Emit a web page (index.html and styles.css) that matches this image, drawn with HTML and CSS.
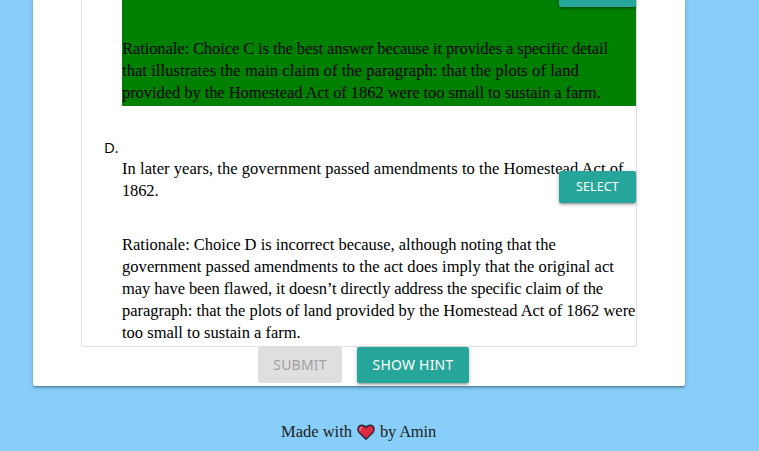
FILE: index.html
```html
<!DOCTYPE html>
<html lang="en">
<head>
<meta charset="utf-8">
<title>Reading quiz</title>
<link rel="stylesheet" href="styles.css">
</head>
<body>
<main class="card">
  <ol class="choices">
    <li class="choice choice-c">
      <div class="choice-body correct">
        <button class="btn select select-c"></button>
        <p class="rationale"><span class="line c1">Rationale: Choice C is the best answer because it provides a specific detail</span><span class="line c2">that illustrates the main claim of the paragraph: that the plots of land</span><span class="line c3">provided by the Homestead Act of 1862 were too small to sustain a farm.</span></p>
      </div>
    </li>
    <li class="choice choice-d">
      <span class="marker">D.</span>
      <div class="choice-body">
        <p><span class="line d1">In later years, the government passed amendments to the Homestead Act of</span><span class="line d2">1862.</span></p>
        <button class="btn select select-d">SELECT</button>
        <p class="rationale"><span class="line r1">Rationale: Choice D is incorrect because, although noting that the</span><span class="line r2">government passed amendments to the act does imply that the original act</span><span class="line r3">may have been flawed, it doesn’t directly address the specific claim of the</span><span class="line r4">paragraph: that the plots of land provided by the Homestead Act of 1862 were</span><span class="line r5">too small to sustain a farm.</span></p>
      </div>
    </li>
  </ol>
  <div class="actions">
    <button class="btn submit" disabled>SUBMIT</button>
    <button class="btn hint">SHOW HINT</button>
  </div>
</main>
<footer class="footer"><span>Made with</span>
  <svg class="heart" viewBox="0 0 18 16"><path d="M9 15.2 2.1 8.5C-.2 5.6 1 1.2 4.8 1.2 6.7 1.2 8.2 2.1 9 3.7 9.8 2.1 11.3 1.2 13.2 1.2 17 1.2 18.2 5.6 15.9 8.5Z" fill="#df2940" stroke="#26283a" stroke-width="1.4"/><path d="M3.2 6.8C2.8 4.5 3.8 3.2 5.2 3.1" fill="none" stroke="#f27c88" stroke-width="1.4"/></svg>
<span class="author">by Amin</span></footer>
</body>
</html>
```
FILE: styles.css
```css
* { box-sizing: border-box; }
html, body { height: 100%; }
body {
  margin: 0;
  overflow: hidden;
  background: #87cefa;
  color: #000;
  font: 16.5px/22px Georgia, "Liberation Serif", serif;
}
p { margin: 0; }
.card {
  width: 652px;
  height: 386px;
  margin-left: 33px;
  background: #fff;
  border-radius: 0 0 2px 2px;
  box-shadow: 0 2px 2px 0 rgba(0,0,0,.14), 0 3px 1px -2px rgba(0,0,0,.12), 0 1px 5px 0 rgba(0,0,0,.2);
}
.choices {
  list-style: none;
  width: 556px;
  height: 347px;
  margin: 0 0 0 48px;
  padding: 0 0 0 40px;
  border: 1px solid #e0e0e0;
  border-top: 0;
  border-radius: 0 0 2px 2px;
}
.choice { position: relative; }
.choice-c { height: 106px; }
.choice-d { padding-top: 52px; }
.correct { height: 106px; padding-top: 38px; background: #008000; }
.marker {
  position: absolute;
  left: -18px;
  top: 30px;
  font: 15px/22px "Open Sans", "Noto Sans", sans-serif;
  letter-spacing: -.5px;
}
.line { display: block; white-space: nowrap; }
.c1 { letter-spacing: -.092px; }
.c2 { letter-spacing: .07px; }
.c3 { letter-spacing: -.063px; }
.d1 { letter-spacing: .055px; }
.d2 { letter-spacing: -.15px; }
.r1 { letter-spacing: -.01px; }
.r2 { letter-spacing: .055px; }
.r3 { letter-spacing: -.1px; }
.r4 { letter-spacing: -.015px; }
.choice-d .rationale { margin-top: 32px; }
.btn {
  height: 36px;
  padding: 0;
  border: 0;
  border-radius: 2px;
  background: #26a69a;
  color: #fff;
  font: 14px/36px "Noto Sans", sans-serif;
  letter-spacing: .2px;
  box-shadow: 0 2px 2px 0 rgba(0,0,0,.14), 0 3px 1px -2px rgba(0,0,0,.12), 0 1px 5px 0 rgba(0,0,0,.2);
}
.select {
  position: absolute;
  right: 0;
  width: 77px;
  height: 32px;
  font-size: 12.5px;
  line-height: 32px;
  letter-spacing: .1px;
}
.select-c { top: -25px; }
.select-d { top: 65px; }
.actions { display: flex; gap: 15px; margin-left: 225px; }
.submit { width: 84px; background: #dfdfdf; color: #9f9f9f; box-shadow: none; }
.hint { width: 112px; }
.footer {
  display: flex;
  align-items: center;
  margin: 35px 0 0 281px;
  color: #212121;
}
.heart { width: 18px; height: 16px; margin: 0 5px; }
.author { letter-spacing: -.2px; }
```
